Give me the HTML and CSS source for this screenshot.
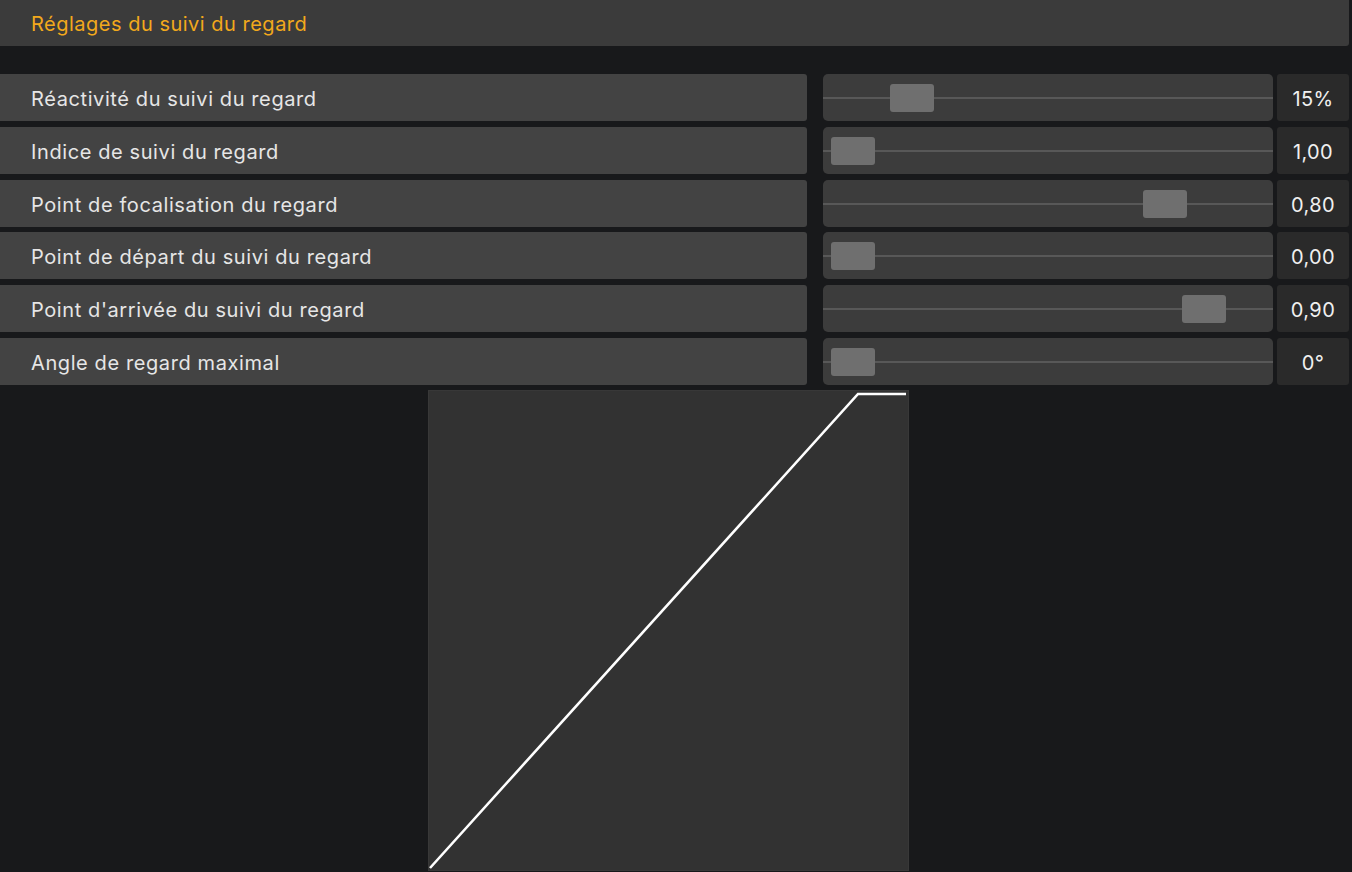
FILE: index.html
```html
<!DOCTYPE html>
<html lang="fr">
<head>
    <meta charset="UTF-8">
    <meta name="viewport" content="width=device-width, initial-scale=1.0">
    <title>Réglages du suivi du regard</title>
    <link rel="stylesheet" href="styles.css">
</head>
<body>
    <div class="panel-header">Réglages du suivi du regard</div>

    <div class="settings">
        <div class="setting-label">Réactivité du suivi du regard</div>
        <div class="slider"><div class="thumb" style="--v: 0.15"></div></div>
        <div class="setting-value">15%</div>

        <div class="setting-label">Indice de suivi du regard</div>
        <div class="slider"><div class="thumb" style="--v: 0"></div></div>
        <div class="setting-value">1,00</div>

        <div class="setting-label">Point de focalisation du regard</div>
        <div class="slider"><div class="thumb" style="--v: 0.8"></div></div>
        <div class="setting-value">0,80</div>

        <div class="setting-label">Point de départ du suivi du regard</div>
        <div class="slider"><div class="thumb" style="--v: 0"></div></div>
        <div class="setting-value">0,00</div>

        <div class="setting-label">Point d'arrivée du suivi du regard</div>
        <div class="slider"><div class="thumb" style="--v: 0.9"></div></div>
        <div class="setting-value">0,90</div>

        <div class="setting-label">Angle de regard maximal</div>
        <div class="slider"><div class="thumb" style="--v: 0"></div></div>
        <div class="setting-value">0°</div>
    </div>

    <div class="curve-wrap">
        <svg class="curve" width="479" height="479" viewBox="0 0 479 479">
            <polyline points="1,477 429,3 477,3" fill="none" stroke="#ffffff" stroke-width="2.6" />
        </svg>
    </div>
</body>
</html>
```

FILE: styles.css
```css
body {
    font-family: Inter, "Noto Sans", sans-serif;
    background-color: #18191b;
    color: #e8e8e8;
    margin: 0;
    padding: 0;
    height: 872px;
    overflow: hidden;
}

.panel-header {
    width: 1349px;
    height: 46px;
    box-sizing: border-box;
    padding: 2px 0 0 31px;
    display: flex;
    align-items: center;
    background: #3b3b3b;
    border-bottom-right-radius: 3px;
    color: #f2a91c;
    font-size: 20px;
    letter-spacing: 0.5px;
}

.settings {
    margin-top: 28px;
    display: grid;
    grid-template-columns: 823px 450px 76px;
    grid-auto-rows: 47px;
    row-gap: 5.8px;
    width: 1349px;
}

.setting-label {
    margin-right: 16px;
    background: #434343;
    border-radius: 0 3px 3px 0;
    padding: 3px 0 0 31px;
    display: flex;
    align-items: center;
    font-size: 20px;
    letter-spacing: 0.6px;
    color: #e6e6e6;
}

.slider {
    position: relative;
    background: #3c3c3c;
    border-radius: 5px;
}

.slider::before {
    content: "";
    position: absolute;
    left: 0;
    right: 0;
    top: 23px;
    height: 2px;
    background: #585858;
}

.thumb {
    position: absolute;
    top: 10px;
    left: calc(8px + (100% - 60px) * var(--v));
    width: 44px;
    height: 28px;
    border-radius: 3px;
    background: #6f6f6f;
}

.setting-value {
    margin-left: 4px;
    background: #2a2a2a;
    border-radius: 3px;
    display: flex;
    align-items: center;
    justify-content: center;
    padding-top: 3px;
    font-size: 20px;
    letter-spacing: 0.4px;
    color: #f0f0f0;
}

.curve-wrap {
    padding-left: 429px;
    margin-top: 6px;
}

.curve {
    display: block;
    background: #323232;
    outline: 1px solid #383838;
}
```
